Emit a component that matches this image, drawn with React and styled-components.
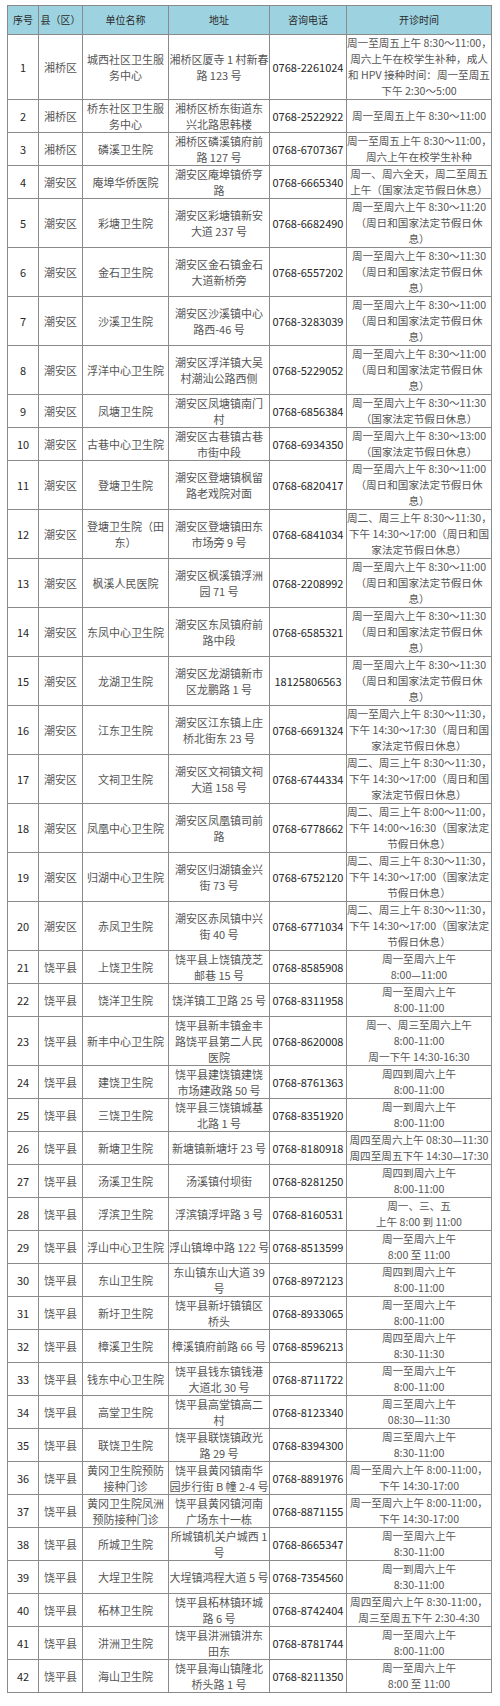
import React from 'react';
import styled, { createGlobalStyle } from 'styled-components';

const GlobalStyle = createGlobalStyle`
  html, body {
    margin: 0;
    padding: 0;
    background: #ffffff;
  }
  body {
    font-family: 'Noto Sans CJK SC', 'Noto Sans', sans-serif;
  }
`;

const Page = styled.div`
  padding: 5px 9px 13px 7px;
`;

const Table = styled.table`
  width: 484px;
  border-collapse: collapse;
  table-layout: fixed;
  font-family: 'Noto Sans CJK SC', 'Noto Sans', sans-serif;
  font-size: 11px;
  line-height: 16px;
  color: #555555;
`;

const HeadCell = styled.th`
  background: #9dd3e1;
  border: 1px solid #8a8a8a;
  padding: 6px 0;
  height: 16px;
  font-size: 10px;
  font-weight: 400;
  line-height: 16px;
  text-align: center;
  color: #2a2a2a;
  white-space: nowrap;
`;

const Cell = styled.td`
  border: 1px solid #8a8a8a;
  padding: 0;
  text-align: center;
  vertical-align: middle;
  white-space: nowrap;
  line-height: 16px;
  font-size: ${(p) => (p.$time ? '10.6px' : '11px')};
  color: ${(p) => (p.$strong ? '#262626' : '#555555')};
`;

const Line = styled.span`
  display: block;
  height: 16px;
  line-height: 16px;
`;

const widths = [31, 44, 86, 101, 77, 145];
const heads = ['序号', '县（区）', '单位名称', '地址', '咨询电话', '开诊时间'];

const rest3 = (t) => [`周一至周六上午 ${t}`, '（周日和国家法定节假日休', '息）'];
const am = (d, t) => [d, t];

const rows = [
  ['湘桥区', ['城西社区卫生服', '务中心'], ['湘桥区厦寺 1 村新春', '路 123 号'], '0768-2261024',
    ['周一至周五上午 8:30～11:00，', '周六上午在校学生补种，成人', '和 HPV 接种时间：周一至周五', '下午 2:30～5:00']],
  ['湘桥区', ['桥东社区卫生服', '务中心'], ['湘桥区桥东街道东', '兴北路思韩楼'], '0768-2522922', ['周一至周五上午 8:30～11:00']],
  ['湘桥区', ['磷溪卫生院'], ['湘桥区磷溪镇府前', '路 127 号'], '0768-6707367', ['周一至周五上午 8:30～11:00，', '周六上午在校学生补种']],
  ['潮安区', ['庵埠华侨医院'], ['潮安区庵埠镇侨亨', '路'], '0768-6665340', ['周一、周六全天，周二至周五', '上午（国家法定节假日休息）']],
  ['潮安区', ['彩塘卫生院'], ['潮安区彩塘镇新安', '大道 237 号'], '0768-6682490', rest3('8:30～11:20')],
  ['潮安区', ['金石卫生院'], ['潮安区金石镇金石', '大道新桥旁'], '0768-6557202', rest3('8:30～11:30')],
  ['潮安区', ['沙溪卫生院'], ['潮安区沙溪镇中心', '路西-46 号'], '0768-3283039', rest3('8:30～11:00')],
  ['潮安区', ['浮洋中心卫生院'], ['潮安区浮洋镇大吴', '村潮汕公路西侧'], '0768-5229052', rest3('8:30～11:00')],
  ['潮安区', ['凤塘卫生院'], ['潮安区凤塘镇南门', '村'], '0768-6856384', ['周一至周六上午 8:30～11:30', '（国家法定节假日休息）']],
  ['潮安区', ['古巷中心卫生院'], ['潮安区古巷镇古巷', '市街中段'], '0768-6934350', ['周一至周六上午 8:30～13:00', '（国家法定节假日休息）']],
  ['潮安区', ['登塘卫生院'], ['潮安区登塘镇枫留', '路老戏院对面'], '0768-6820417', rest3('8:30～11:00')],
  ['潮安区', ['登塘卫生院（田', '东）'], ['潮安区登塘镇田东', '市场旁 9 号'], '0768-6841034',
    ['周二、周三上午 8:30～11:30，', '下午 14:30～17:00（周日和国', '家法定节假日休息）']],
  ['潮安区', ['枫溪人民医院'], ['潮安区枫溪镇浮洲', '园 71 号'], '0768-2208992', rest3('8:30～11:00')],
  ['潮安区', ['东凤中心卫生院'], ['潮安区东凤镇府前', '路中段'], '0768-6585321', rest3('8:30～11:30')],
  ['潮安区', ['龙湖卫生院'], ['潮安区龙湖镇新市', '区龙鹏路 1 号'], '18125806563', rest3('8:30～11:30')],
  ['潮安区', ['江东卫生院'], ['潮安区江东镇上庄', '桥北街东 23 号'], '0768-6691324',
    ['周一至周六上午 8:30～11:30，', '下午 14:30～17:30（周日和国', '家法定节假日休息）']],
  ['潮安区', ['文祠卫生院'], ['潮安区文祠镇文祠', '大道 158 号'], '0768-6744334',
    ['周二、周三上午 8:30～11:30，', '下午 14:30～17:00（周日和国', '家法定节假日休息）']],
  ['潮安区', ['凤凰中心卫生院'], ['潮安区凤凰镇司前', '路'], '0768-6778662',
    ['周二、周三上午 8:00～11:00，', '下午 14:00～16:30（国家法定', '节假日休息）']],
  ['潮安区', ['归湖中心卫生院'], ['潮安区归湖镇金兴', '街 73 号'], '0768-6752120',
    ['周二、周三上午 8:30～11:30，', '下午 14:30～17:00（国家法定', '节假日休息）']],
  ['潮安区', ['赤凤卫生院'], ['潮安区赤凤镇中兴', '街 40 号'], '0768-6771034',
    ['周二、周三上午 8:30～11:30，', '下午 14:30～17:00（国家法定', '节假日休息）']],
  ['饶平县', ['上饶卫生院'], ['饶平县上饶镇茂芝', '邮巷 15 号'], '0768-8585908', am('周一至周六上午', '8:00—11:00')],
  ['饶平县', ['饶洋卫生院'], ['饶洋镇工卫路 25 号'], '0768-8311958', am('周一至周六上午', '8:00-11:00')],
  ['饶平县', ['新丰中心卫生院'], ['饶平县新丰镇金丰', '路饶平县第二人民', '医院'], '0768-8620008',
    ['周一、周三至周六上午', '8:00-11:00', '周一下午 14:30-16:30']],
  ['饶平县', ['建饶卫生院'], ['饶平县建饶镇建饶', '市场建政路 50 号'], '0768-8761363', am('周四到周六上午', '8:00-11:00')],
  ['饶平县', ['三饶卫生院'], ['饶平县三饶镇城基', '北路 1 号'], '0768-8351920', am('周一到周六上午', '8:00-11:00')],
  ['饶平县', ['新塘卫生院'], ['新塘镇新塘圩 23 号'], '0768-8180918', ['周四至周六上午 08:30—11:30', '周四至周五下午 14:30—17:30']],
  ['饶平县', ['汤溪卫生院'], ['汤溪镇付坝街'], '0768-8281250', am('周四到周六上午', '8:00-11:00')],
  ['饶平县', ['浮滨卫生院'], ['浮滨镇浮坪路 3 号'], '0768-8160531', am('周一、三、五', '上午 8:00 到 11:00')],
  ['饶平县', ['浮山中心卫生院'], ['浮山镇埠中路 122 号'], '0768-8513599', am('周一至周六上午', '8:00 至 11:00')],
  ['饶平县', ['东山卫生院'], ['东山镇东山大道 39', '号'], '0768-8972123', am('周四到周六上午', '8:00-11:00')],
  ['饶平县', ['新圩卫生院'], ['饶平县新圩镇镇区', '桥头'], '0768-8933065', am('周一至周六上午', '8:00-11:00')],
  ['饶平县', ['樟溪卫生院'], ['樟溪镇府前路 66 号'], '0768-8596213', am('周四至周六上午', '8:30-11:30')],
  ['饶平县', ['钱东中心卫生院'], ['饶平县钱东镇钱港', '大道北 30 号'], '0768-8711722', am('周一至周六上午', '8:00-11:00')],
  ['饶平县', ['高堂卫生院'], ['饶平县高堂镇高二', '村'], '0768-8123340', am('周三至周六上午', '08:30—11:30')],
  ['饶平县', ['联饶卫生院'], ['饶平县联饶镇政光', '路 29 号'], '0768-8394300', am('周三至周六上午', '8:30-11:00')],
  ['饶平县', ['黄冈卫生院预防', '接种门诊'], ['饶平县黄冈镇南华', '园步行街 B 幢 2-4 号'], '0768-8891976',
    ['周一至周六上午 8:00-11:00，', '下午 14:30-17:00']],
  ['饶平县', ['黄冈卫生院凤洲', '预防接种门诊'], ['饶平县黄冈镇河南', '广场东十一栋'], '0768-8871155',
    ['周一至周六上午 8:00-11:00，', '下午 14:30-17:00']],
  ['饶平县', ['所城卫生院'], ['所城镇机关户城西 1', '号'], '0768-8665347', am('周一至周六上午', '8:30-11:00')],
  ['饶平县', ['大埕卫生院'], ['大埕镇鸿程大道 5 号'], '0768-7354560', am('周一到周六上午', '8:30-11:00')],
  ['饶平县', ['柘林卫生院'], ['饶平县柘林镇环城', '路 6 号'], '0768-8742404', ['周四至周六上午 8:30-11:00，', '周三至周五下午 2:30-4:30']],
  ['饶平县', ['汫洲卫生院'], ['饶平县汫洲镇汫东', '田东'], '0768-8781744', am('周一至周六上午', '8:00-11:00')],
  ['饶平县', ['海山卫生院'], ['饶平县海山镇隆北', '桥头路 1 号'], '0768-8211350', am('周一至周六上午', '8:00 至 11:00')],
];

function Lines({ items }) {
  return items.map((t, i) => <Line key={i}>{t}</Line>);
}

export default function App() {
  return (
    <Page>
      <GlobalStyle />
      <Table>
        <colgroup>
          {widths.map((w, i) => (
            <col key={i} style={{ width: w }} />
          ))}
        </colgroup>
        <thead>
          <tr>
            {heads.map((h) => (
              <HeadCell key={h}>{h}</HeadCell>
            ))}
          </tr>
        </thead>
        <tbody>
          {rows.map(([county, name, addr, phone, time], i) => (
            <tr key={i}>
              <Cell $strong>{i + 1}</Cell>
              <Cell>{county}</Cell>
              <Cell><Lines items={name} /></Cell>
              <Cell><Lines items={addr} /></Cell>
              <Cell $strong>{phone}</Cell>
              <Cell $time><Lines items={time} /></Cell>
            </tr>
          ))}
        </tbody>
      </Table>
    </Page>
  );
}
